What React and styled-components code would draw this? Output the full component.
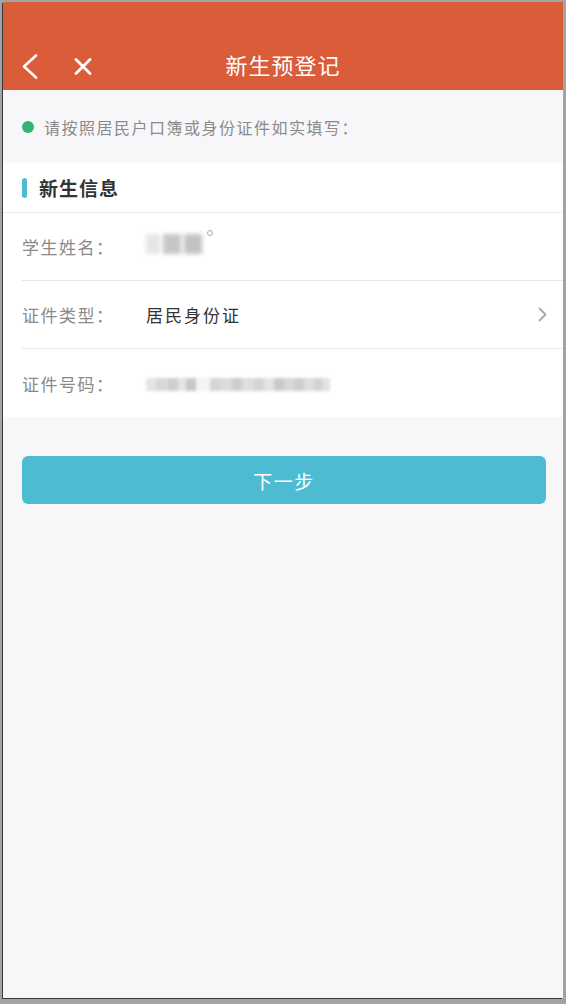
import React from "react";
import styled, { createGlobalStyle } from "styled-components";

const Global = createGlobalStyle`
  html, body { margin: 0; padding: 0; background: #a3a3a3; }
  body { font-family: "Noto Sans CJK SC", "Noto Sans", sans-serif; }
  * { box-sizing: border-box; }
`;

const Frame = styled.div`
  width: 566px;
  height: 1004px;
  padding: 2px 3px 6px 3px;
  background: #a3a3a3;
`;

const Screen = styled.div`
  height: 100%;
  display: flex;
  flex-direction: column;
  background: #f7f7f9;
  box-shadow: -1px 1px 0 #3a3a3a;
  overflow: hidden;
`;

const Header = styled.header`
  height: 88px;
  background: #da5c39;
  display: flex;
  flex-direction: column;
  justify-content: flex-end;
`;

const NavBar = styled.div`
  height: 50px;
  display: grid;
  grid-template-columns: 1fr auto 1fr;
  align-items: center;
`;

const NavLeft = styled.div`
  display: flex;
  align-items: center;
  gap: 36px;
  padding-left: 19px;
  padding-top: 3px;
`;

const IconBtn = styled.span`
  display: inline-flex;
  color: #fff;
`;

const Title = styled.h1`
  margin: 0 0 3px 0;
  font-size: 22px;
  font-weight: 400;
  letter-spacing: 1px;
  color: #fff;
`;

const Notice = styled.div`
  height: 73px;
  display: flex;
  align-items: center;
  padding-left: 19px;
  gap: 10px;
  color: #8a8a8a;
  font-size: 16px;
  letter-spacing: 1.5px;
`;

const Dot = styled.span`
  width: 12px;
  height: 12px;
  border-radius: 50%;
  background: #35b277;
  flex: none;
`;

const Section = styled.section`
  background: #fff;
`;

const SectionHead = styled.div`
  height: 50px;
  display: flex;
  align-items: center;
  gap: 12px;
  padding-left: 19px;
  border-bottom: 1px solid #ededf0;
`;

const Bar = styled.span`
  width: 5px;
  height: 20px;
  border-radius: 3px;
  background: #4dbcd4;
`;

const SectionTitle = styled.h2`
  margin: 0;
  font-size: 19px;
  font-weight: 700;
  letter-spacing: 1px;
  color: #333;
`;

const Row = styled.div`
  height: 68px;
  margin-left: 19px;
  padding-right: 16px;
  display: flex;
  align-items: center;
  border-bottom: ${(p) => (p.$last ? "none" : "1px solid #e6e6ea")};
`;

const Label = styled.span`
  width: 124px;
  flex: none;
  font-size: 17px;
  letter-spacing: 1.5px;
  color: #8a8a8a;
`;

const Value = styled.span`
  flex: 1;
  font-size: 17px;
  letter-spacing: 2px;
  color: #333;
`;

const Blurred = styled.span`
  position: relative;
  display: inline-flex;
  align-items: center;
  gap: ${(p) => p.$gap}px;
  filter: blur(${(p) => p.$blur || 1.8}px);
  margin-top: ${(p) => p.$offset || 0}px;
`;

const Chunk = styled.span`
  display: inline-block;
  width: ${(p) => p.$w}px;
  height: ${(p) => p.$h}px;
  background: ${(p) => p.$c};
`;

const NameWrap = styled.span`
  position: relative;
  display: inline-flex;
`;

const Degree = styled.span`
  position: absolute;
  right: -11px;
  top: -4px;
  width: 6px;
  height: 6px;
  border-radius: 50%;
  border: 1.2px solid #aaa;
`;

const Chevron = styled.span`
  display: inline-flex;
  color: #a8a8a8;
`;

const Button = styled.button`
  margin: 39px 17px 0 19px;
  height: 48px;
  border: none;
  border-radius: 6px;
  background: #4dbbd1;
  color: #fff;
  font-family: inherit;
  font-size: 19px;
  letter-spacing: 1.5px;
`;

const BackIcon = () => (
  <svg width="16" height="25" viewBox="0 0 16 25">
    <polyline points="14,1.5 2,12.5 14,23.5" fill="none" stroke="currentColor" strokeWidth="2.6" strokeLinecap="round" strokeLinejoin="round" />
  </svg>
);

const CloseIcon = () => (
  <svg width="18" height="17" viewBox="0 0 18 17">
    <path d="M2 1.5 L16 15.5 M16 1.5 L2 15.5" stroke="currentColor" strokeWidth="2.8" strokeLinecap="round" />
  </svg>
);

const RightIcon = () => (
  <svg width="9" height="15" viewBox="0 0 9 15">
    <polyline points="1.5,1.5 7.5,7.5 1.5,13.5" fill="none" stroke="currentColor" strokeWidth="1.8" strokeLinecap="round" strokeLinejoin="round" />
  </svg>
);

const idChunks = [
  [10, "#e4e4e4"], [12, "#d8d8d8"], [10, "#cfcfcf"], [8, "#e4e4e4"], [10, "#c8c8c8"],
  [14, "#f4f4f4"], [10, "#d6d6d6"], [12, "#dcdcdc"], [10, "#cdcdcd"], [12, "#dedede"],
  [10, "#d4d4d4"], [10, "#e4e4e4"], [10, "#cacaca"], [10, "#d8d8d8"], [10, "#cecece"],
  [10, "#dedede"], [8, "#d2d2d2"], [8, "#e2e2e2"],
];

export default function App() {
  return (
    <>
      <Global />
      <Frame>
        <Screen>
          <Header>
            <NavBar>
              <NavLeft>
                <IconBtn><BackIcon /></IconBtn>
                <IconBtn><CloseIcon /></IconBtn>
              </NavLeft>
              <Title>新生预登记</Title>
              <span />
            </NavBar>
          </Header>

          <Notice>
            <Dot />
            请按照居民户口簿或身份证件如实填写：
          </Notice>

          <Section>
            <SectionHead>
              <Bar />
              <SectionTitle>新生信息</SectionTitle>
            </SectionHead>
            <Row>
              <Label>学生姓名：</Label>
              <Value>
                <NameWrap>
                  <Blurred $gap={3} $offset={0} $blur={2}>
                    <Chunk $w={14} $h={20} $c="#e6e6e6" />
                    <Chunk $w={18} $h={20} $c="#c6c6c6" />
                    <Chunk $w={18} $h={20} $c="#c2c2c2" />
                  </Blurred>
                  <Degree />
                </NameWrap>
              </Value>
            </Row>
            <Row>
              <Label>证件类型：</Label>
              <Value>居民身份证</Value>
              <Chevron><RightIcon /></Chevron>
            </Row>
            <Row $last>
              <Label>证件号码：</Label>
              <Value>
                <Blurred $gap={0} $offset={2} $blur={1.8}>
                  {idChunks.map(([w, c], i) => (
                    <Chunk key={i} $w={w} $h={13} $c={c} />
                  ))}
                </Blurred>
              </Value>
            </Row>
          </Section>

          <Button>下一步</Button>
        </Screen>
      </Frame>
    </>
  );
}
